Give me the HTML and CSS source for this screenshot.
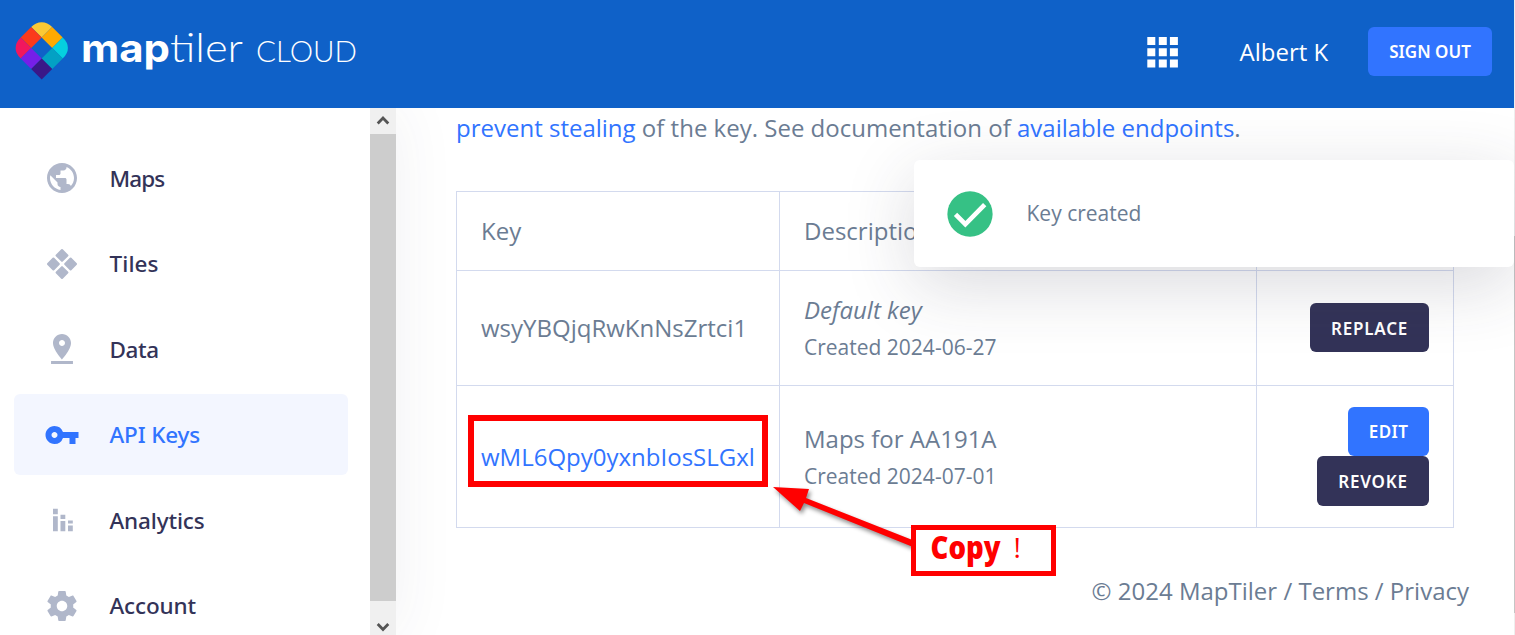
FILE: index.html
```html
<!DOCTYPE html>
<html lang="en">
<head>
<meta charset="utf-8">
<title>API Keys | MapTiler Cloud</title>
<link rel="stylesheet" href="styles.css">
</head>
<body>
<div class="app">
  <div class="window">
    <header class="topbar">
      <svg class="logo" width="370" height="108" viewBox="0 0 370 108" role="img" aria-label="MapTiler Cloud">
        <path fill="#fbc935" d="M41.7 37.4 31.2 27Q35.8 22.3 41.7 22.3T52.2 27z"/>
        <path fill="#fb3a1b" d="M31.2 27 41.7 37.4 31.2 47.9 20.7 37.4z"/>
        <path fill="#f1175d" d="M20.7 37.4 31.2 47.9 20.7 58.4Q15.6 53.5 15.6 47.9T20.7 37.4z"/>
        <path fill="#ffaa01" d="M52.2 27 62.7 37.4 52.2 47.9 41.7 37.4z"/>
        <path fill="#05d0df" d="M62.7 37.4 52.2 47.9 62.7 58.4Q67.9 53.5 67.9 47.9T62.7 37.4z"/>
        <path fill="#761fe8" d="M31.2 47.9 41.7 58.4 31.2 68.9 20.7 58.4z"/>
        <path fill="#03a1c4" d="M52.2 47.9 62.7 58.4 52.2 68.9 41.7 58.4z"/>
        <path fill="#3a1888" d="M41.7 58.4 52.2 68.9 41.7 79.6 31.2 68.9z"/>
        <text class="logo-bold" x="81" y="62" textLength="89" lengthAdjust="spacingAndGlyphs">map</text>
        <text class="logo-thin" x="170" y="62" textLength="73" lengthAdjust="spacingAndGlyphs">tiler</text>
        <text class="logo-sub" x="256" y="62" textLength="101" lengthAdjust="spacingAndGlyphs">CLOUD</text>
      </svg>
      <div class="account">
        <svg width="32" height="32" viewBox="0 0 32 32" fill="#fff"><path d="M.3 1h8v8h-8zM11.800 1h8v8h-8zM22.900 1h8v8h-8zM.3 12.300h8v8h-8zM11.800 12.300h8v8h-8zM22.900 12.300h8v8h-8zM.3 23.600h8v8h-8zM11.800 23.600h8v8h-8zM22.900 23.600h8v8h-8z"/></svg>
        <span class="user">Albert K</span>
        <button class="btn btn-signout">SIGN OUT</button>
      </div>
    </header>
    <div class="body">
      <aside class="sidebar">
        <nav class="nav">
          <a class="item"><svg viewBox="0 0 24 24"><path d="M12 2C6.480 2 2 6.480 2 12s4.480 10 10 10 10-4.480 10-10S17.520 2 12 2zm-1 17.930c-3.950-.49-7-3.850-7-7.930 0-.62.08-1.210.21-1.790L9 15v1c0 1.100.9 2 2 2v1.930zm6.900-2.540c-.26-.81-1-1.390-1.900-1.390h-1v-3c0-.55-.45-1-1-1H8v-2h2c.55 0 1-.45 1-1V7h2c1.100 0 2-.9 2-2v-.41c2.930 1.190 5 4.060 5 7.410 0 2.080-.8 3.970-2.100 5.390z"/></svg><span class="t-maps">Maps</span></a>
          <a class="item"><svg viewBox="0 0 24 24"><g transform="rotate(45 12 12)"><rect x="4.700" y="4.700" width="6.500" height="6.500" rx=".7"/><rect x="12.800" y="4.700" width="6.500" height="6.500" rx=".7"/><rect x="4.700" y="12.800" width="6.500" height="6.500" rx=".7"/><rect x="12.800" y="12.800" width="6.500" height="6.500" rx=".7"/></g></svg><span class="t-tiles">Tiles</span></a>
          <a class="item"><svg viewBox="0 0 24 24"><path d="M18 8c0-3.310-2.690-6-6-6S6 4.690 6 8c0 4.500 6 11 6 11s6-6.500 6-11zm-8 0c0-1.100.9-2 2-2s2 .9 2 2-.89 2-2 2c-1.100 0-2-.9-2-2zM4.700 20v2h14.600v-2z"/></svg><span class="t-data">Data</span></a>
          <a class="item active"><svg viewBox="0 0 24 24"><path d="M12.650 10A5.990 5.990 0 0 0 7 6c-3.310 0-6 2.690-6 6s2.690 6 6 6a5.990 5.990 0 0 0 5.650-4H17v4h4v-4h2v-4H12.650zM7 14c-1.100 0-2-.9-2-2s.9-2 2-2 2 .9 2 2-.9 2-2 2z"/></svg><span>API Keys</span></a>
          <a class="item"><svg viewBox="0 0 24 24"><path d="M6 9.500h3.200v10H6zM6 4.500h3.200v3.700H6zM11 12.600h3.200v6.900H11zM11 8.500h3.200v2.800H11zM16 15.600h3.200v3.900H16zM16 12.400h3.200v1.900H16z"/></svg><span>Analytics</span></a>
          <a class="item"><svg viewBox="0 0 24 24"><path d="M19.430 12.980c.04-.32.07-.64.07-.98s-.03-.66-.07-.98l2.110-1.650c.19-.15.24-.42.12-.64l-2-3.460c-.12-.22-.39-.3-.61-.22l-2.490 1c-.52-.4-1.080-.73-1.690-.98l-.38-2.650C14.460 2.180 14.250 2 14 2h-4c-.25 0-.46.18-.49.42l-.38 2.650c-.61.25-1.170.59-1.690.98l-2.490-1c-.23-.09-.49 0-.61.22l-2 3.460c-.13.22-.07.49.12.64l2.110 1.650c-.04.32-.07.65-.07.98s.03.66.07.98l-2.110 1.650c-.19.15-.24.42-.12.64l2 3.460c.12.22.39.3.61.22l2.490-1c.52.4 1.080.73 1.690.98l.38 2.650c.03.24.24.42.49.42h4c.25 0 .46-.18.49-.42l.38-2.650c.61-.25 1.170-.59 1.690-.98l2.490 1c.23.09.49 0 .61-.22l2-3.460c.12-.22.07-.49-.12-.64l-2.110-1.650zM12 15.500c-1.930 0-3.500-1.570-3.500-3.500s1.570-3.500 3.500-3.500 3.500 1.570 3.500 3.500-1.570 3.500-3.500 3.500z"/></svg><span>Account</span></a>
        </nav>
        <div class="scrollbar">
          <svg width="26" height="26" viewBox="0 0 26 26"><path d="M7.700 15.500 13 10l5.300 5.500" fill="none" stroke="#555" stroke-width="2.800"/></svg>
          <div class="thumb"></div>
          <svg width="26" height="34" viewBox="0 0 26 34"><path d="M7.700 23 13 28.500l5.300-5.500" fill="none" stroke="#555" stroke-width="2.800"/></svg>
        </div>
      </aside>
      <main class="content">
        <p class="intro"><a>prevent stealing</a> of the key. See documentation of <a>available endpoints</a>.</p>
        <div class="table">
          <div class="cell">Key</div><div class="cell">Description</div><div class="cell"></div>
          <div class="cell">wsyYBQjqRwKnNsZrtci1</div>
          <div class="cell desc"><i>Default key</i><small>Created 2024-06-27</small></div>
          <div class="cell actions"><button class="btn btn-dark btn-replace">REPLACE</button></div>
          <div class="cell"><a>wML6Qpy0yxnbIosSLGxl</a></div>
          <div class="cell desc"><span>Maps for AA191A</span><small>Created 2024-07-01</small></div>
          <div class="cell actions"><button class="btn btn-edit">EDIT</button><button class="btn btn-dark btn-revoke">REVOKE</button></div>
        </div>
        <footer class="footer">© 2024 MapTiler / Terms / Privacy</footer>
      </main>
    </div>
  </div>
  <div class="page-scroll"><div class="page-thumb"></div></div>
  <div class="toast">
    <svg width="56" height="56" viewBox="0 0 24 24"><circle cx="12" cy="12" r="9.700" fill="#36c185"/><path d="M5.800 12.200 10 16.400 18.300 8" fill="none" stroke="#fff" stroke-width="2"/></svg>
    <span>Key created</span>
  </div>
  <svg class="annotation" width="1515" height="635" viewBox="0 0 1515 635">
    <rect x="471" y="418" width="294" height="66" fill="none" stroke="#f00" stroke-width="6"/>
    <path class="arrow" fill="#f00" d="M773 487 809 489 806 498 915 541 913 547 804 503 800 511z"/>
    <rect x="913.500" y="527.500" width="140" height="46" fill="#fff" stroke="#f00" stroke-width="5"/>
    <text class="note" x="930.500" y="558.500" textLength="70" lengthAdjust="spacingAndGlyphs">Copy</text>
    <text class="bang" x="1013.500" y="558">!</text>
  </svg>
</div>
</body>
</html>
```
FILE: styles.css
```css
* { box-sizing: border-box; }
body { margin: 0; font-family: "Open Sans", sans-serif; color: #6b7c93; background: #fff; }
a { color: #3174ff; }
.app { position: relative; display: flex; width: 1515px; height: 635px; overflow: hidden; }
.window { width: 1514px; display: flex; flex-direction: column; }
.topbar { position: relative; z-index: 1; height: 108px; flex: none; display: flex; justify-content: space-between; background: #0f61c8; color: #fff; }
.logo { display: block; fill: #fff; }
.logo-bold { font: 700 39px Inter, sans-serif; }
.logo-thin { font: 300 39px Lato, sans-serif; }
.logo-sub { font: 300 29px Lato, sans-serif; }
.account { display: flex; align-items: center; padding: 0 22px 5px 0; }
.user { margin: 0 39.500px 0 60.500px; width: 89px; white-space: nowrap; font-size: 24px; }
.btn { border: 0; border-radius: 6px; height: 49px; padding: 0; color: #fff; background: #3174ff; font: 600 17px "Noto Sans", sans-serif; white-space: nowrap; }
.btn-signout { width: 124px; }
.btn-dark { background: #333358; }
.btn-replace { width: 119px; padding-top: 1px; letter-spacing: .8px; }
.btn-edit { width: 81px; letter-spacing: .4px; }
.btn-revoke { width: 112px; height: 50px; letter-spacing: .8px; }
.body { flex: 1; min-height: 0; display: flex; }
.sidebar { width: 396px; flex: none; display: flex; box-shadow: 0 0 60px rgba(51, 51, 88, .07); }
.nav { width: 370px; padding: 29.600px 22px 0 14px; display: flex; flex-direction: column; gap: 4.600px; overflow: hidden; }
.item { height: 81px; flex: none; padding: 0 0 .2px 30px; border-radius: 6px; display: flex; align-items: center; gap: 30px; color: #333358; font: 500 22.500px "Noto Sans", sans-serif; letter-spacing: -.15px; }
.item span { margin-left: -.5px; }
.item svg { width: 36px; height: 36px; fill: #b0b7ca; }
.item .t-maps { letter-spacing: -.9px; }
.item .t-tiles { letter-spacing: .1px; }
.item .t-data { letter-spacing: -.4px; }
.item.active { background: #f3f6ff; color: #3174ff; }
.item.active svg { fill: #3174ff; }
.scrollbar { width: 26px; display: flex; flex-direction: column; background: #f0f0f0; }
.scrollbar svg { flex: none; }
.thumb { flex: 1; background: #cdcdcd; }
.content { flex: 1; padding: 0 45px 0 60px; font-size: 24px; }
.intro { margin: 2px 0 45px; line-height: 36px; white-space: nowrap; }
.table { width: 998px; display: grid; grid-template-columns: 323px 477px 197px; grid-template-rows: 79px 115px 142px; border: solid #d3daee; border-width: 1px 0 0 1px; }
.cell { border: solid #d3daee; border-width: 0 1px 1px 0; padding: 0 24px; display: flex; flex-direction: column; justify-content: center; line-height: 36px; }
.cell.desc { padding-top: 2px; }
.cell small { font-size: 21px; line-height: 38px; }
.actions { align-items: flex-end; padding-bottom: 1px; }
.actions:last-child { padding-bottom: 0; }
.footer { margin-top: 45px; text-align: right; line-height: 36px; }
.page-scroll { width: 1px; background: #eee; padding-top: 236px; }
.page-thumb { height: 377px; background: #c5c5c5; }
.toast { position: absolute; left: 914px; top: 160px; width: 600px; height: 107px; padding-left: 28px; background: #fff; border-radius: 6px; box-shadow: 0 18px 70px rgba(51, 51, 70, .18); display: flex; align-items: center; gap: 28.500px; font-size: 21px; }
.toast span { padding-bottom: 2px; }
.annotation { position: absolute; left: 0; top: 0; z-index: 2; }
.arrow { filter: drop-shadow(2px 3px 2px rgba(0, 0, 0, .45)); }
.note { font: 800 31px "Open Sans", sans-serif; fill: #f00; }
.bang { font: 400 28px "Open Sans", sans-serif; fill: #f00; }
```
